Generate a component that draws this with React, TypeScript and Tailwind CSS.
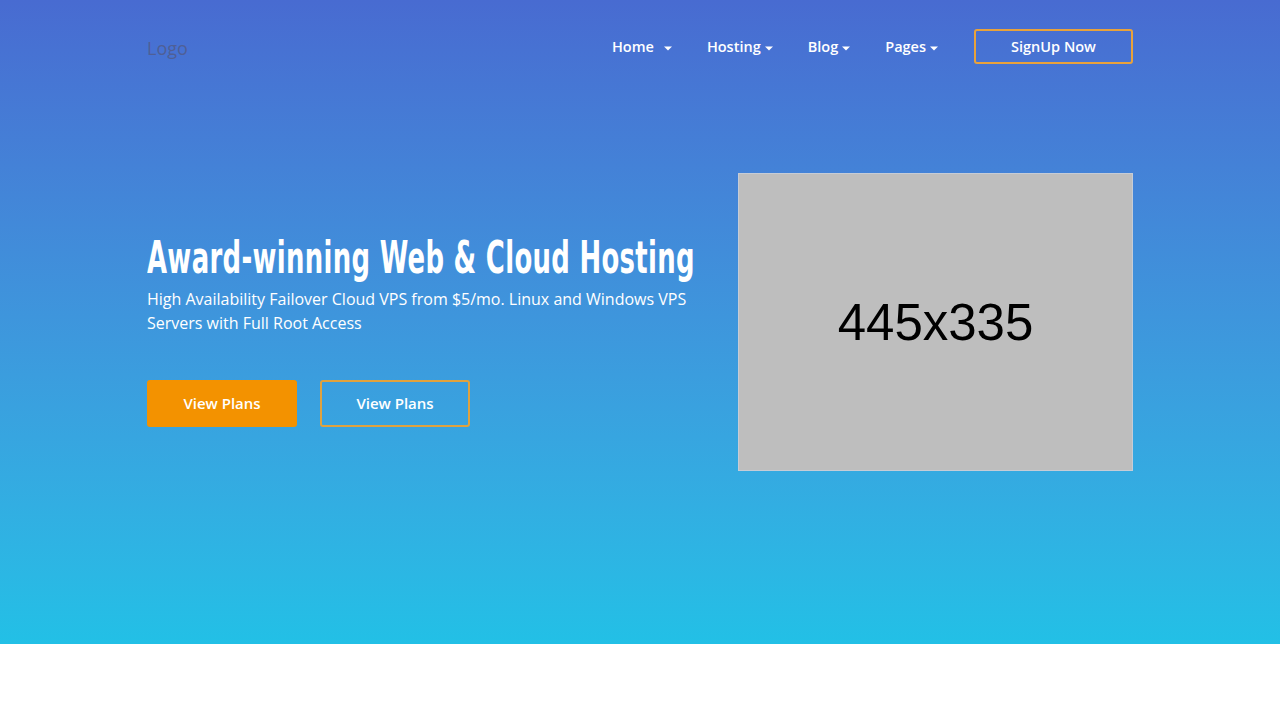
import React from 'react';

const navItems = [
  { label: 'Home', gap: 'ml-[10px]' },
  { label: 'Hosting', gap: 'ml-[4px]' },
  { label: 'Blog', gap: 'ml-[4px]' },
  { label: 'Pages', gap: 'ml-[4px]' },
];

const Caret = ({ className = '' }: { className?: string }) => (
  <svg width="8" height="5" viewBox="0 0 8 5" className={className}>
    <path d="M0 0.5 L8 0.5 L4 4.5 Z" fill="white" />
  </svg>
);

const App = () => {
  return (
    <div className="min-h-screen bg-white font-['Open_Sans',sans-serif]">
      {/* Hero */}
      <section className="h-[644px] bg-gradient-to-b from-[#486bd1] to-[#22c0e6]">
        <div className="w-[986px] mx-auto">
          {/* Header */}
          <header className="h-[92px] flex items-center justify-between">
            <div className="text-[18px] text-[#4f5f96] leading-none mt-[4px]">Logo</div>
            <nav className="flex items-center">
              <ul className="flex items-center gap-[35px] mr-[36px] mt-[2px]">
                {navItems.map((item) => (
                  <li key={item.label} className="flex items-center text-white text-[14.5px] font-semibold">
                    {item.label}
                    <Caret className={`${item.gap} mt-[2px]`} />
                  </li>
                ))}
              </ul>
              <button className="w-[159px] h-[35px] pt-[1px] border-2 border-[#e9a23b] rounded-[3px] text-white text-[14.5px] font-semibold">
                SignUp Now
              </button>
            </nav>
          </header>

          {/* Content */}
          <div className="flex items-start justify-between mt-[81px]">
            <div className="w-[560px] mt-[61px]">
              <h1 className="h-[48px] leading-[48px] whitespace-nowrap">
                <span className="inline-block origin-left scale-x-[0.64] font-['DejaVu_Sans_Condensed',sans-serif] font-bold text-white text-[45px] tracking-[0.5px]">
                  Award-winning Web &amp; Cloud Hosting
                </span>
              </h1>
              <p className="mt-[5px] text-white text-[16px] leading-[24px]">
                High Availability Failover Cloud VPS from $5/mo. Linux and Windows VPS Servers with Full Root Access
              </p>
              <div className="flex gap-[23px] mt-[45px]">
                <button className="w-[150px] h-[47px] bg-[#f39200] rounded-[3px] text-white text-[15px] font-semibold">
                  View Plans
                </button>
                <button className="w-[150px] h-[47px] border-2 border-[#e0a23e] rounded-[3px] text-white text-[15px] font-semibold">
                  View Plans
                </button>
              </div>
            </div>
            <div className="w-[395px] h-[298px] bg-[#bebebe] border border-[#c6ccd6] flex items-center justify-center">
              <span className="font-['Liberation_Sans',Arial,sans-serif] text-[51px] text-black leading-none">445x335</span>
            </div>
          </div>
        </div>
      </section>
    </div>
  );
};

export default App;
